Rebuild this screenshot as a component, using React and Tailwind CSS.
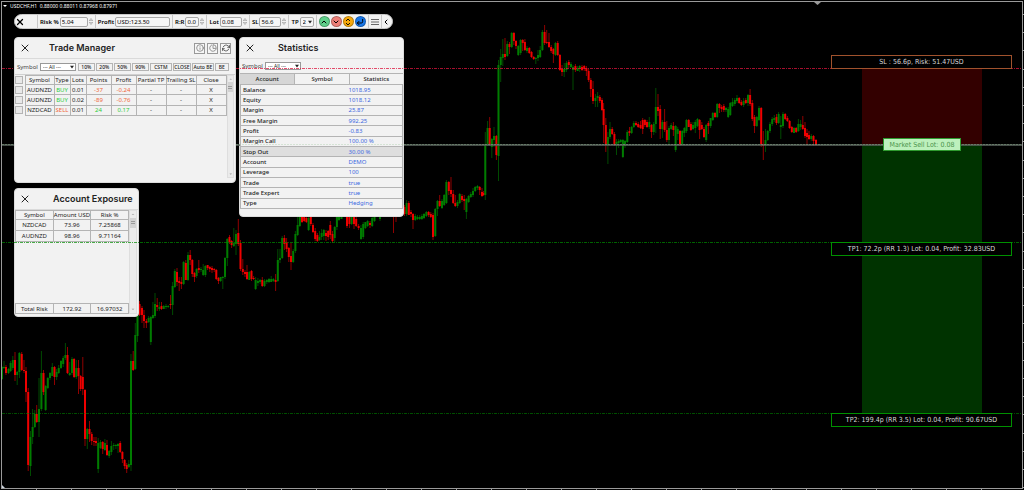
import React from "react";
import {
  FiChevronDown,
  FiChevronLeft,
  FiChevronUp,
  FiCornerDownLeft,
  FiInfo,
  FiPieChart,
  FiRefreshCw,
  FiX,
} from "react-icons/fi";

// x, high, body top, body bottom, low, direction
const CANDLES = `
2 366 367 379 380 u|4 361 367 368 369 u|6 365 367 373 375 d|8.5 368 369 373 374 u|10.6 361 363 371 372 u|12.8 356 360 368 370 u|15 352 360 375 381 d|17.2 371 372 375 385 u|19.4 352 353 372 378 u|21.7 352 354 370 371 d|24 360 370 371 373 d
26 367 371 392 402 d|28.2 388 392 465 471 d|30.5 431 437 466 476 u|32.6 409 427 437 444 u|34.8 410 414 427 428 u|36.7 405 414 422 423 d|39 378 409 422 437 u|41.4 351 373 409 411 u|43.5 370 373 392 395 d|45.6 385 386 410 411 u|47.8 377 378 388 389 u
50 372 373 378 380 u|52.3 363 367 376 376 u|54.5 366 367 377 385 d|56.6 369 372 377 380 u|58.7 365 368 373 374 u|61 360 361 368 369 u|63.2 356 358 364 367 u|65.4 343 355 358 360 u|67.5 347 355 373 374 d|69.7 362 373 375 376 u|72 357 359 373 375 u
74.1 358 359 377 378 d|76.3 360 368 377 379 u|78.5 360 368 376 394 d|80.6 375 376 389 391 d|82.8 357 377 389 395 d|85 389 390 439 446 d|87.3 428 429 439 449 u|89.5 421 429 434 442 d|91.7 432 434 441 445 d|94 437 441 442 446 d|96 437 441 443 446 d
98.2 438 443 469 473 u|100.5 440 442 448 449 u|102.7 441 442 449 454 d|104.9 439 443 450 451 u|107 440 445 455 456 d|109.2 450 451 456 458 u|111.4 441 446 452 455 u|113.7 443 445 446 450 u|115.9 444 445 446 449 u|118 443 444 446 453 u|120.2 441 443 452 453 d
122.4 451 452 459 463 d|124.6 459 460 466 469 d|126.7 463 465 469 473 d|128.8 460 464 467 468 u|131 354 361 465 471 u|133.2 351 361 370 371 d|135.3 323 335 369 370 u|137.5 312 315 336 342 u|139.5 301 304 315 316 d|142 306 308 315 323 d|144 310 315 321 328 d
146.4 319 321 323 328 d|148.6 316 318 322 323 u|150.8 316 317 342 345 u|152.9 302 315 318 319 u|155 293 304 316 318 u|157.2 298 305 307 311 d|159.4 302 307 309 311 u|161.5 302 306 309 310 d|163.7 305 306 309 309 u|166 304 306 307 309 u|168.2 305 306 307 308 u
170.5 295 304 305 309 d|172.6 282 286 305 315 u|174.8 269 271 287 288 u|177 268 272 282 286 d|179.2 277 281 283 291 d|181.4 277 282 284 289 d|183.6 261 262 284 285 u|185.8 260 263 280 280 d|188 252 255 280 281 u|190.2 250 255 260 265 d|192.3 259 260 274 277 d
194.5 272 273 277 282 d|196.6 268 269 276 278 u|198.8 260 268 270 273 d|201 267 269 270 272 u|203.2 264 270 275 276 u|205.4 265 266 275 277 u|207.6 265 265 268 270 d|209.8 266 267 269 272 d|212 266 268 270 273 d|214.2 268 269 270 272 d|216.3 269 270 279 280 d
218.5 277 278 281 284 d|220.6 277 277 281 282 u|222.8 276 277 278 289 u|225 257 258 277 279 u|227.3 238 239 258 266 u|229.5 235 237 242 244 d|231.6 240 241 245 248 d|233.8 228 243 246 247 u|236 230 234 244 255 u|238.3 219 233 244 246 d|240.5 240 243 269 271 d
242.8 259 269 272 275 d|245 270 272 274 277 d|247 265 272 279 280 d|249.3 271 272 280 280 u|251.5 270 271 279 281 d|253.6 276 278 279 280 d|255.6 277 280 289 290 u|257.9 278 281 283 286 u|260.1 279 280 282 284 u|262.3 277 280 286 287 d|264.5 279 281 286 287 u
266.8 279 280 282 284 u|269 278 279 282 283 u|271.2 276 279 282 282 u|273.4 278 279 281 282 u|275.6 274 280 282 291 d|277.8 249 260 281 282 u|280 249 258 260 263 u|282.2 236 238 258 259 u|284.4 235 238 244 250 d|286.6 238 242 249 252 d|288.8 247 248 257 262 d
291 243 256 262 270 d|293.2 249 251 262 263 u|295.4 231 234 251 253 u|297.6 216 225 235 236 u|299.8 216 217 226 227 u|302 216 216 222 223 d|304.2 216 217 221 222 d|306.4 216 218 222 223 d|308.6 216 218 230 231 u|310.8 215 217 224 226 d|313 223 225 232 233 d
315.2 228 231 239 241 d|317.4 233 235 241 242 d|319.5 231 237 240 241 u|321.6 229 233 237 240 u|323.8 229 230 236 240 u|326 230 233 236 241 d|328.2 230 231 237 240 d|330.3 221 225 235 239 d|332.5 231 234 241 243 d|334.7 226 227 238 242 u|336.9 216 217 227 230 u
339 215 216 220 221 u|341.5 215 216 219 219 u|347 215 216 226 228 d|349.4 215 216 224 228 d|351.6 216 217 224 225 u|354 214 216 224 229 d|356.2 217 219 226 227 d|358.6 224 226 228 230 d|361 225 228 239 240 u|363.2 222 224 237 239 u|365.4 222 222 228 229 u
367.6 220 221 226 227 u|370 221 223 225 228 d|372.2 216 218 226 227 u|374.5 215 216 221 222 u|380 214 216 219 221 u|393.5 213 214 215 233 d|396 214 215 217 222 d|404.5 205 207 214 216 d|406.6 200 203 214 216 u|408.8 201 203 215 215 d|411 210 212 214 217 d
413 213 214 220 229 d|415.3 214 216 220 221 u|417.5 215 217 219 220 u|419.7 215 217 219 220 u|421.9 214 216 219 220 u|424 213 214 218 219 u|426.4 211 212 216 217 u|428.6 211 212 215 217 d|430.8 212 214 217 218 d|433 213 215 237 240 d|435.3 208 209 236 237 u
437.5 200 201 209 216 u|439.7 195 201 206 207 d|442 199 201 208 209 u|444.2 194 195 205 206 u|446.4 180 182 203 204 u|448.8 181 182 191 195 d|451 177 190 194 197 d|453.2 190 194 203 204 d|455.3 195 203 206 207 d|457.5 200 202 206 208 u|459.7 193 194 203 204 u
462 194 196 200 202 d|464.2 195 199 201 210 d|466.4 198 199 212 219 u|468.6 195 196 202 203 u|470.8 192 194 197 198 u|473 188 191 195 197 u|475.2 186 187 191 192 u|477.5 185 186 188 190 u|479.7 186 187 190 195 d|482 188 192 196 197 d|483.6 191 193 195 196 d
485.3 132 144 195 200 u|487.6 121 128 144 146 u|489.7 117 128 145 146 d|491.8 138 139 147 158 u|494 127 136 140 147 u|496.4 135 136 155 160 d|498.5 60 65 156 181 u|500.7 49 57 65 82 u|502.8 39 54 58 66 u|505 38 54 57 60 d|507.3 41 44 56 57 u
509.5 42 44 47 54 d|511.7 32 33 47 48 u|513.9 32 33 41 45 d|516 40 41 46 49 d|518.3 45 46 55 56 u|520.6 39 40 53 55 u|522.7 39 40 43 51 d|524.9 39 42 50 51 d|527 46 48 51 53 u|529.3 47 48 53 54 d|531.5 51 52 57 58 d
533.7 56 57 59 60 d|535.8 57 58 59 64 u|538 50 55 58 61 u|540.2 46 50 57 58 u|542.4 30 32 50 51 u|544.6 25 32 43 45 d|546.7 30 42 43 44 d|549 33 42 47 48 d|551.2 45 47 51 53 d|553.4 48 49 54 63 d|555.5 42 43 55 56 u
557.7 41 43 55 56 d|559.9 54 55 70 71 d|562 65 69 72 76 d|564.2 63 69 72 77 u|566.5 61 63 70 72 u|568.8 60 62 65 68 d|571 62 64 67 68 u|573 65 67 70 90 u|575.4 64 66 70 72 d|577.6 66 68 71 71 u|579.7 65 66 69 72 u
582 65 67 70 71 d|584.2 65 66 69 71 d|586.4 66 68 71 76 d|588.6 69 71 80 82 d|590.8 78 80 89 97 d|593 81 89 101 104 d|595.4 94 98 101 107 u|597.6 92 96 98 107 u|599.8 95 97 101 103 d|602 98 100 110 111 d
603.6 103 109 125 143 d|605.8 118 125 145 152 d|607.9 132 137 145 164 u|610 122 129 137 139 u|612.2 127 129 134 135 d|614.4 132 134 145 146 d|616.5 139 142 144 155 u|618.6 139 141 143 148 u|620.7 139 140 142 143 u|622.9 139 140 157 158 u|625 140 141 146 148 u
627.3 130 132 142 143 u|629.5 127 131 133 136 d|631.6 126 127 133 134 u|633.8 121 123 127 128 u|636 121 123 125 126 d|638.2 122 124 127 128 d|640.5 121 125 128 129 d|642.7 118 120 129 134 d|644.9 119 120 125 127 d|647 120 122 127 128 d|649.3 117 122 127 129 u
651.5 124 125 132 138 d|653.7 122 124 132 135 u|655.8 88 107 124 133 u|658 94 107 111 116 d|660.2 105 109 129 139 d|662.4 120 122 129 138 u|664.6 109 122 130 132 d|666.8 121 130 140 142 d|669 126 128 140 145 u|671.2 123 125 129 130 u|673.4 122 126 130 136 d
675.6 125 126 150 152 u|677.7 127 129 134 140 u|680 130 131 145 146 d|682.2 130 131 145 145 u|684.4 127 128 133 137 u|686.5 119 120 131 133 u|688.7 119 120 127 127 d|690.9 122 124 130 131 d|693 122 125 129 130 u|695.3 120 122 128 133 u|697.5 118 119 126 127 u
699.6 119 120 130 139 d|701.8 122 125 129 130 d|704 127 129 137 138 d|706.2 124 125 140 142 u|708.4 121 123 126 134 d|710.6 118 118 126 128 u|712.8 112 113 120 121 u|715 112 113 117 118 d|717.2 103 104 117 118 u|719.4 103 104 108 113 d|721.6 105 107 109 112 d
723.8 104 106 110 112 d|726 107 108 110 112 u|728.2 107 109 117 118 u|730.3 102 103 115 116 u|732.5 98 102 106 107 u|734.8 98 100 104 106 u|737 95 98 101 103 u|739.2 97 98 103 104 d|741.4 100 102 105 106 d|743.6 98 101 105 107 u|745.8 98 100 103 104 d
748 94 95 103 106 u|750.1 89 95 104 106 d|752.3 100 103 119 121 d|754.5 115 117 126 133 d|756.8 116 117 126 127 u|759 106 108 120 121 u|761.2 107 108 145 147 d|763.3 131 144 146 160 d|765.5 129 140 145 152 u|767.7 130 131 140 141 u|770 122 124 131 133 u
772.2 117 119 124 126 u|774.3 115 118 120 122 u|776.5 114 117 123 125 d|778.6 112 114 123 124 u|780.8 116 125 127 139 u|783 112 114 126 128 u|785.2 113 114 119 120 d|787.4 116 118 121 122 d|789.6 120 121 128 129 d|791.8 126 127 132 133 d|794 127 128 133 133 u
796.2 127 128 132 133 d|798.4 119 124 131 132 u|800.6 120 124 127 130 u|802.8 116 125 129 130 d|805 122 128 136 138 d|807 129 133 137 145 d|809 131 135 139 140 d|811.3 134 136 139 141 u|813.5 135 136 141 146 d|816 139 140 145 146 d
`
  .trim()
  .split(/[|\n]/)
  .map((row) => {
    const [x, high, top, bottom, low, dir] = row.trim().split(" ");
    return { x: +x, high: +high, top: +top, bottom: +bottom, low: +low, up: dir === "u" };
  });

const TRADES = [
  { symbol: "AUDNZD", type: "BUY", lots: "0.01", points: "-37", profit: "-0.24" },
  { symbol: "AUDNZD", type: "BUY", lots: "0.02", points: "-89", profit: "-0.76" },
  { symbol: "NZDCAD", type: "SELL", lots: "0.01", points: "24", profit: "0.17" },
];

const STATS = [
  ["Balance", "1018.95"],
  ["Equity", "1018.12"],
  ["Margin", "25.87"],
  ["Free Margin", "992.25"],
  ["Profit", "-0.83"],
  ["Margin Call", "100.00 %"],
  ["Stop Out", "30.00 %"],
  ["Account", "DEMO"],
  ["Leverage", "100"],
  ["Trade", "true"],
  ["Trade Expert", "true"],
  ["Type", "Hedging"],
];

const EXPOSURE = [
  ["NZDCAD", "73.96", "7.25868"],
  ["AUDNZD", "98.96", "9.71164"],
];

const cell = "border border-[#b4b4b4] p-0 text-center font-normal";

const Chart = () => (
  <svg className="absolute inset-0 w-full h-full" aria-hidden="true">
    <rect x="862" y="69" width="120" height="76" fill="#330000" />
    <rect x="862" y="145" width="120" height="268" fill="#003300" />
    {CANDLES.map((c) => (
      <g key={c.x} fill={c.up ? "#007c00" : "#f00000"}>
        <rect x={c.x - 0.5} y={c.high} width="1" height={c.low - c.high} opacity="0.6" />
        <rect x={c.x - 1} y={c.top} width="2" height={c.bottom - c.top} />
      </g>
    ))}
    {/* Frame and axis ticks */}
    <g fill="#9a9a9a">
      <rect x="1" y="1" width="1022" height="1" />
      <rect x="1" y="1" width="1" height="488" />
      <rect x="1" y="488" width="1022" height="1" />
      <rect x="1022" y="1" width="1" height="488" />
      {Array.from({ length: 27 }, (_, i) => (
        <rect key={i} x="1023" y={14 + Math.round(i * 18.2)} width="1" height="1" />
      ))}
      {Array.from({ length: 28 }, (_, i) => (
        <rect key={i} x={36 + i * 35} y="489" width="1" height="1" />
      ))}
      <path d="M814 2h7l-3.5 3z" />
    </g>
    <path d="M2 485l3 3H2z" fill="#c8d2dc" />
    <path d="M3 5h4l-2 2z" fill="#fff" />
  </svg>
);

const PriceLines = () => (
  <svg className="absolute inset-0 w-full h-full pointer-events-none" aria-hidden="true">
    <line x1="2" x2="1022" y1="68.5" y2="68.5" stroke="#dc143c" strokeOpacity="0.75" strokeDasharray="3 1 1 1" />
    <line x1="2" x2="240" y1="145" y2="145" stroke="#56605a" strokeWidth="2" strokeOpacity="0.8" />
    <line x1="404" x2="1022" y1="145" y2="145" stroke="#56605a" strokeWidth="2" strokeOpacity="0.8" />
    <line x1="2" x2="1022" y1="144.5" y2="144.5" stroke="#a0c8a0" strokeOpacity="0.35" strokeDasharray="2 1" />
    <line x1="2" x2="1022" y1="242.5" y2="242.5" stroke="#008c00" strokeOpacity="0.7" strokeDasharray="3 1 1 1" />
    <line x1="2" x2="1022" y1="413.5" y2="413.5" stroke="#008c00" strokeOpacity="0.55" strokeDasharray="3 1 1 1" />
  </svg>
);

const Spinner = ({ label }) => (
  <span className="flex flex-col justify-center gap-px w-1 text-[#888]">
    <button aria-label={`Increase ${label}`} className="block">
      <svg viewBox="0 0 4 3" className="block w-full">
        <path d="M0.300 2.700L2 .5l1.700 2.200z" fill="none" stroke="currentColor" strokeWidth="0.6" />
      </svg>
    </button>
    <button aria-label={`Decrease ${label}`} className="block">
      <svg viewBox="0 0 4 3" className="block w-full">
        <path d="M0.300 .3L2 2.500l1.700-2.200z" fill="none" stroke="currentColor" strokeWidth="0.6" />
      </svg>
    </button>
  </span>
);

const Field = ({ id, label, value, width, spinner = true }) => (
  <div className="flex items-center gap-px px-0.5 border-l border-[#c8c8c8] h-full">
    <label htmlFor={id} className="font-semibold whitespace-nowrap">
      {label}
    </label>
    <input
      id={id}
      defaultValue={value}
      className={`${width} h-2.5 px-px bg-[#f6f6f6] border border-[#a8a8a8] rounded-xs`}
    />
    {spinner && <Spinner label={label} />}
  </div>
);

const RoundButton = ({ label, color, children }) => (
  <button
    aria-label={label}
    className={`flex items-center justify-center w-[11px] h-[11px] rounded-full border border-black/25 ${color}`}
  >
    {children}
  </button>
);

const Toolbar = () => (
  <div className="absolute left-3.5 top-3.5 flex items-center h-[15px] bg-[#f2f2f2] border border-[#c8c8c8] rounded-full text-[6px] leading-[8px]">
    <button aria-label="Close toolbar" className="flex items-center w-[22px]">
      <FiX className="w-2.5 h-2.5" strokeWidth={3} />
    </button>
    <Field id="risk" label="Risk %" value="5.04" width="w-7" />
    <Field id="profit" label="Profit" value="USD:123.50" width="w-[55px]" spinner={false} />
    <Field id="rr" label="R:R" value="0.0" width="w-3.5" />
    <Field id="lot" label="Lot" value="0.08" width="w-[22px]" />
    <Field id="sl" label="SL" value="56.6" width="w-[22px]" />
    <div className="flex items-center gap-px px-0.5 h-full border-x border-[#c8c8c8]">
      <label htmlFor="tp" className="font-semibold">
        TP
      </label>
      <span className="relative flex items-center">
        <select id="tp" className="w-3.5 h-2.5 pl-0.5 appearance-none border border-[#a8a8a8] bg-[#f6f6f6] rounded-xs">
          <option>2</option>
        </select>
        <Caret />
      </span>
    </div>
    <div className="flex items-center gap-px px-0.5">
      <RoundButton label="Buy" color="bg-[#5fd08a]">
        <FiChevronUp className="w-2 h-2" strokeWidth={3} />
      </RoundButton>
      <RoundButton label="Sell" color="bg-[#ec7f78]">
        <FiChevronDown className="w-2 h-2" strokeWidth={3} />
      </RoundButton>
      <RoundButton label="Pending" color="bg-[#f5a80c]">
        <svg viewBox="0 0 8 8" className="w-2 h-2" fill="none" stroke="currentColor" strokeWidth="0.9">
          <path d="M2 3l2-2 2 2M2 5l2 2 2-2" />
        </svg>
      </RoundButton>
      <RoundButton label="Send" color="bg-[#1877e8]">
        <FiCornerDownLeft className="w-2 h-2" strokeWidth={3} />
      </RoundButton>
    </div>
    <button aria-label="Menu" className="flex items-center justify-center w-3.5 h-full border-x border-[#c8c8c8]">
      <svg viewBox="0 0 8 8" className="w-2 h-2" stroke="#444" strokeWidth="0.8">
        <path d="M0 1.500h8M0 4h8M0 6.500h8" />
      </svg>
    </button>
    <button aria-label="Collapse" className="flex items-center w-2.5">
      <FiChevronLeft className="w-2 h-2" strokeWidth={3} />
    </button>
  </div>
);

const Caret = () => (
  <svg viewBox="0 0 4 4" className="absolute right-0.5 w-1 h-1 pointer-events-none">
    <path d="M0 .8h4L2 3.600z" fill="#222" />
  </svg>
);

const SymbolFilter = ({ id, width }) => (
  <>
    <label htmlFor={id} className="text-[#444]">
      Symbol
    </label>
    <span className="relative flex items-center">
      <select
        id={id}
        className={`${width} h-2 pl-0.5 leading-[6px] text-[5px] appearance-none border border-[#999] bg-white`}
      >
        <option>--- All ---</option>
      </select>
      <Caret />
    </span>
  </>
);

const Panel = ({ className, title, titleClass, actions, children }) => (
  <section
    className={`absolute flex flex-col overflow-hidden rounded bg-[#f2f2f2] border border-[#dcdcdc] text-[6px] leading-[8px] text-[#222] ${className}`}
  >
    <header className="flex items-center h-[21px] px-1 border-b border-[#dadada]">
      <button aria-label={`Close ${title}`}>
        <FiX className="w-3 h-3" />
      </button>
      <h2 className={`font-['Inter',sans-serif] font-semibold text-[9px] leading-[12px] whitespace-nowrap ${titleClass}`}>
        {title}
      </h2>
      {actions}
    </header>
    {children}
  </section>
);

const Scrollbar = () => (
  <div className="flex flex-col justify-between w-[9px] bg-[#ebebeb] border border-[#dedede]">
    <div>
      <svg viewBox="0 0 9 10" className="block w-full">
        <path d="M2.500 6h4L4.500 4z" fill="#aaa" />
      </svg>
      <div className="flex flex-col items-center justify-center gap-px h-2.5 bg-[#d2d2d2]">
        <span className="w-1 h-px bg-[#9a9a9a]" />
        <span className="w-1 h-px bg-[#9a9a9a]" />
      </div>
    </div>
    <svg viewBox="0 0 9 10" className="block w-full">
      <path d="M2.500 4h4L4.500 6z" fill="#999" />
    </svg>
  </div>
);

const HeaderIcon = ({ label, children }) => (
  <button aria-label={label} className="flex items-center justify-center w-[11px] h-[11px] border border-[#999] bg-[#f6f6f6]">
    {children}
  </button>
);

const Check = ({ label }) => (
  <input
    type="checkbox"
    aria-label={label}
    className="block w-2 h-2 appearance-none bg-[#e8e8e8] border border-[#b4b4b4]"
  />
);

const tone = (value) => (value.startsWith("-") ? "text-[#f0683c]" : "text-[#2ecc40]");

const filterButton = "h-2 text-[5px] leading-[6px] whitespace-nowrap border border-[#b4b4b4] font-medium";

const TradeManager = () => (
  <Panel
    className="left-3.5 top-[37px] w-[222px] h-[146px]"
    title="Trade Manager"
    titleClass="ml-[18px]"
    actions={
      <div className="flex gap-0.5 ml-auto">
        <HeaderIcon label="Info">
          <FiInfo className="w-2 h-2 text-[#666]" />
        </HeaderIcon>
        <HeaderIcon label="Exposure">
          <FiPieChart className="w-2 h-2 text-[#666]" />
        </HeaderIcon>
        <HeaderIcon label="Refresh">
          <FiRefreshCw className="w-2 h-2" />
        </HeaderIcon>
      </div>
    }
  >
    <div className="flex items-center h-[15px] gap-px pl-0.5">
      <div className="flex items-center gap-0.5 pr-px">
        <SymbolFilter id="trade-symbol" width="w-9" />
      </div>
      {["10%", "20%", "50%", "90%"].map((p) => (
        <button key={p} className={`w-[17px] ${filterButton}`}>
          {p}
        </button>
      ))}
      <button className={`w-[22px] ${filterButton}`}>CSTM</button>
      <button className={`w-[18px] ${filterButton}`}>CLOSE</button>
      <button className={`w-[22px] ${filterButton}`}>Auto BE</button>
      <button className={`w-[14px] ${filterButton}`}>BE</button>
    </div>
    <div className="flex flex-1 justify-between pb-1 pr-px border-t border-[#d0d0d0]">
      <table className="w-[211px] h-[41px] border-collapse table-fixed">
        <colgroup>
          <col className="w-[10px]" />
          <col className="w-[29px]" />
          <col className="w-4" />
          <col className="w-4" />
          <col className="w-[25px]" />
          <col className="w-[25px]" />
          <col className="w-[30px]" />
          <col className="w-[30px]" />
          <col className="w-[30px]" />
        </colgroup>
        <thead>
          <tr>
            <th className="p-0">
              <Check label="Select all" />
            </th>
            {["Symbol", "Type", "Lots", "Points", "Profit", "Partial TP", "Trailing SL", "Close"].map((h) => (
              <th key={h} className={`${cell} whitespace-nowrap`}>
                {h}
              </th>
            ))}
          </tr>
        </thead>
        <tbody>
          {TRADES.map((t, i) => (
            <tr key={i}>
              <td className="p-0">
                <Check label={`Select trade ${i + 1}`} />
              </td>
              <td className={cell}>{t.symbol}</td>
              <td className={`${cell} ${t.type === "BUY" ? "text-[#2ecc40]" : "text-[#f0683c]"}`}>{t.type}</td>
              <td className={cell}>{t.lots}</td>
              <td className={`${cell} ${tone(t.points)}`}>{t.points}</td>
              <td className={`${cell} ${tone(t.profit)}`}>{t.profit}</td>
              <td className={cell}>-</td>
              <td className={cell}>-</td>
              <td className={cell}>
                <button>X</button>
              </td>
            </tr>
          ))}
        </tbody>
      </table>
      <Scrollbar />
    </div>
  </Panel>
);

const Statistics = () => (
  <Panel className="left-[239px] top-[37px] w-[165px] h-[180px]" title="Statistics" titleClass="ml-[22px]">
    <div className="flex items-center h-3.5 gap-0.5 pl-0.5">
      <SymbolFilter id="stat-symbol" width="w-9" />
    </div>
    <div role="tablist" className="grid grid-cols-3 h-[11px] border-t border-[#b4b4b4]">
      <button role="tab" aria-selected="true" className="font-medium bg-[#d6d6d6]">
        Account
      </button>
      <button role="tab" className="font-medium border-l border-[#b4b4b4]">
        Symbol
      </button>
      <button role="tab" className="font-medium border-l border-[#b4b4b4]">
        Statistics
      </button>
    </div>
    <table className="w-full h-[125px] border-collapse">
      <tbody>
        {STATS.map(([name, value]) => (
          <tr key={name} className={`border border-[#b4b4b4] ${name === "Stop Out" ? "bg-[#dedede]" : ""}`}>
            <th className="w-2/3 p-0 pl-0.5 font-medium text-left">{name}</th>
            <td className="p-0 text-[#4169e1]">{value}</td>
          </tr>
        ))}
      </tbody>
    </table>
  </Panel>
);

const AccountExposure = () => (
  <Panel className="left-3.5 top-[188px] w-[125px] h-[129px]" title="Account Exposure" titleClass="ml-[22px]">
    <div className="flex flex-1 justify-between pb-0.5 pr-px">
      <div className="flex flex-col justify-between">
        <table className="w-[114px] h-8 border-collapse table-fixed">
          <thead>
            <tr>
              {["Symbol", "Amount USD", "Risk %"].map((h) => (
                <th key={h} className={`${cell} whitespace-nowrap`}>
                  {h}
                </th>
              ))}
            </tr>
          </thead>
          <tbody>
            {EXPOSURE.map((row) => (
              <tr key={row[0]}>
                {row.map((v) => (
                  <td key={v} className={cell}>
                    {v}
                  </td>
                ))}
              </tr>
            ))}
          </tbody>
        </table>
        <table className="w-[114px] h-[11px] border-collapse table-fixed">
          <tbody>
            <tr>
              <th className={cell}>Total Risk</th>
              <td className={cell}>172.92</td>
              <td className={cell}>16.97032</td>
            </tr>
          </tbody>
        </table>
      </div>
      <Scrollbar />
    </div>
  </Panel>
);

const PriceLabel = ({ className, children }) => (
  <div
    className={`absolute left-[831px] flex items-center justify-center w-[181px] h-[14px] border bg-black text-[#d8d8d8] text-[7px] leading-[8px] font-['DejaVu_Sans_Condensed','DejaVu_Sans',sans-serif] whitespace-nowrap ${className}`}
  >
    {children}
  </div>
);

const App = () => {
  return (
    <main className="relative min-h-screen overflow-hidden bg-black font-['Noto_Sans','Open_Sans',sans-serif]">
      <Chart />
      <h1 className="absolute left-2.5 top-0.5 text-white text-[5px] leading-[8px] whitespace-pre">
        USDCHF,H1{"  "}0.88000 0.88011 0.87968 0.87971
      </h1>
      <Statistics />
      <AccountExposure />
      <PriceLines />
      <TradeManager />
      <Toolbar />

      <PriceLabel className="top-[55px] border-[#a0522d]">SL : 56.6p, Risk: 51.47USD</PriceLabel>
      <PriceLabel className="top-[242px] border-[#009000]">
        TP1: 72.2p (RR 1.3) Lot: 0.04, Profit: 32.83USD
      </PriceLabel>
      <PriceLabel className="top-[413px] border-[#009000]">
        TP2: 199.4p (RR 3.5) Lot: 0.04, Profit: 90.67USD
      </PriceLabel>
      <button className="absolute left-[883px] top-[138px] w-[78px] h-[13px] border border-[#2e9a2e] bg-[#bdf0bd] text-[#4c944c] text-[7px] leading-[8px] font-['DejaVu_Sans_Condensed','DejaVu_Sans',sans-serif] whitespace-nowrap">
        Market Sell Lot: 0.08
      </button>
    </main>
  );
};

export default App;
